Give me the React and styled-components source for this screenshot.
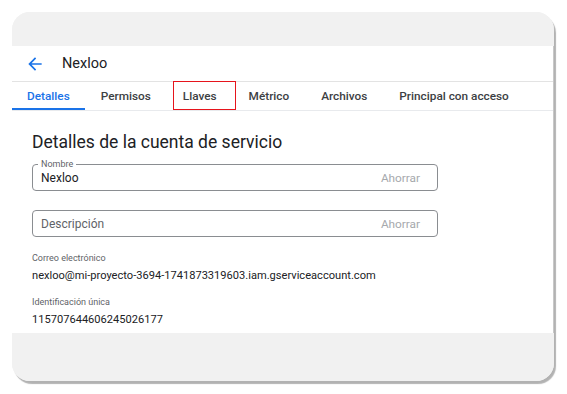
import React from "react";
import styled, { createGlobalStyle } from "styled-components";

const GlobalStyle = createGlobalStyle`
  html, body {
    margin: 0;
    padding: 0;
    background: #ffffff;
    font-family: Roboto, "Liberation Sans", Arial, sans-serif;
  }
`;

const Page = styled.div`
  width: 567px;
  height: 394px;
  padding: 12px 0 0 12px;
  box-sizing: border-box;
`;

const Card = styled.div`
  width: 542px;
  height: 369px;
  border-radius: 18px;
  overflow: hidden;
  background: #f1f1f1;
  box-shadow: 2px 3px 1px rgba(0, 0, 0, 0.3);
  display: grid;
  grid-template-rows: 34px 287px 1fr;
`;

const Band = styled.div`
  background: #f1f1f1;
`;

const Panel = styled.div`
  background: #ffffff;
  display: flex;
  flex-direction: column;
  border-right: 1px solid #c8c8c8;
`;

const Header = styled.div`
  height: 35px;
  display: flex;
  align-items: center;
  gap: 17px;
  padding-left: 13px;
  border-bottom: 1px solid #e3e3e3;
  font-size: 14.5px;
  color: #202124;
`;

const BackIcon = styled.svg`
  width: 20px;
  height: 20px;
  fill: #1a73e8;
`;

const Tabs = styled.div`
  height: 28px;
  display: flex;
  border-bottom: 1px solid #e8eaed;
`;

const Tab = styled.div`
  position: relative;
  padding: 0 16px;
  display: flex;
  align-items: center;
  font-size: 11.8px;
  font-weight: 500;
  color: ${(p) => (p.$active ? "#1a73e8" : "#3c4043")};
  box-shadow: ${(p) => (p.$active ? "inset 0 -2px 0 #1a73e8" : "none")};
  &:first-child {
    padding: 0 15px;
  }
`;

const Highlight = styled.span`
  position: absolute;
  top: -1px;
  bottom: 0;
  left: 6px;
  right: -3px;
  border: 1px solid rgb(230, 20, 28);
`;

const Body = styled.div`
  padding: 19px 0 0 20px;
  display: flex;
  flex-direction: column;
`;

const Title = styled.h1`
  margin: 0 0 10px;
  font-size: 17.5px;
  font-weight: 400;
  color: #202124;
  line-height: 24px;
`;

const Field = styled.div`
  position: relative;
  width: 406px;
  height: 27px;
  box-sizing: border-box;
  border: 1px solid #8a8d91;
  border-radius: 4px;
  display: flex;
  align-items: center;
  justify-content: space-between;
  padding: 0 17px 0 8px;
  margin-bottom: ${(p) => p.$gap || 0}px;
  font-size: 12px;
  color: ${(p) => (p.$empty ? "#5f6368" : "#202124")};
`;

const Legend = styled.span`
  position: absolute;
  top: -7px;
  left: 5px;
  padding: 0 3px;
  background: #ffffff;
  font-size: 9px;
  color: #5f6368;
  line-height: 12px;
`;

const Save = styled.span`
  color: #a6a9ad;
  font-size: 11.8px;
`;

const Label = styled.div`
  font-size: 9px;
  color: #5f6368;
  line-height: 14px;
`;

const Value = styled.div`
  font-size: 11.1px;
  color: #202124;
  line-height: 16px;
  margin: 3px 0 ${(p) => p.$gap || 0}px;
`;

const tabs = ["Detalles", "Permisos", "Llaves", "Métrico", "Archivos", "Principal con acceso"];

export default function App() {
  return (
    <>
      <GlobalStyle />
      <Page>
        <Card>
          <Band />
          <Panel>
            <Header>
              <BackIcon viewBox="0 0 24 24">
                <path d="M20 11H7.83l5.59-5.59L12 4l-8 8 8 8 1.41-1.41L7.83 13H20v-2z" />
              </BackIcon>
              <span>Nexloo</span>
            </Header>
            <Tabs>
              {tabs.map((t, i) => (
                <Tab key={t} $active={i === 0}>
                  {t}
                  {t === "Llaves" && <Highlight />}
                </Tab>
              ))}
            </Tabs>
            <Body>
              <Title>Detalles de la cuenta de servicio</Title>
              <Field $gap={19}>
                <Legend>Nombre</Legend>
                <span>Nexloo</span>
                <Save>Ahorrar</Save>
              </Field>
              <Field $empty $gap={14}>
                <span>Descripción</span>
                <Save>Ahorrar</Save>
              </Field>
              <Label>Correo electrónico</Label>
              <Value $gap={11}>nexloo@mi-proyecto-3694-1741873319603.iam.gserviceaccount.com</Value>
              <Label>Identificación única</Label>
              <Value>115707644606245026177</Value>
            </Body>
          </Panel>
          <Band />
        </Card>
      </Page>
    </>
  );
}
